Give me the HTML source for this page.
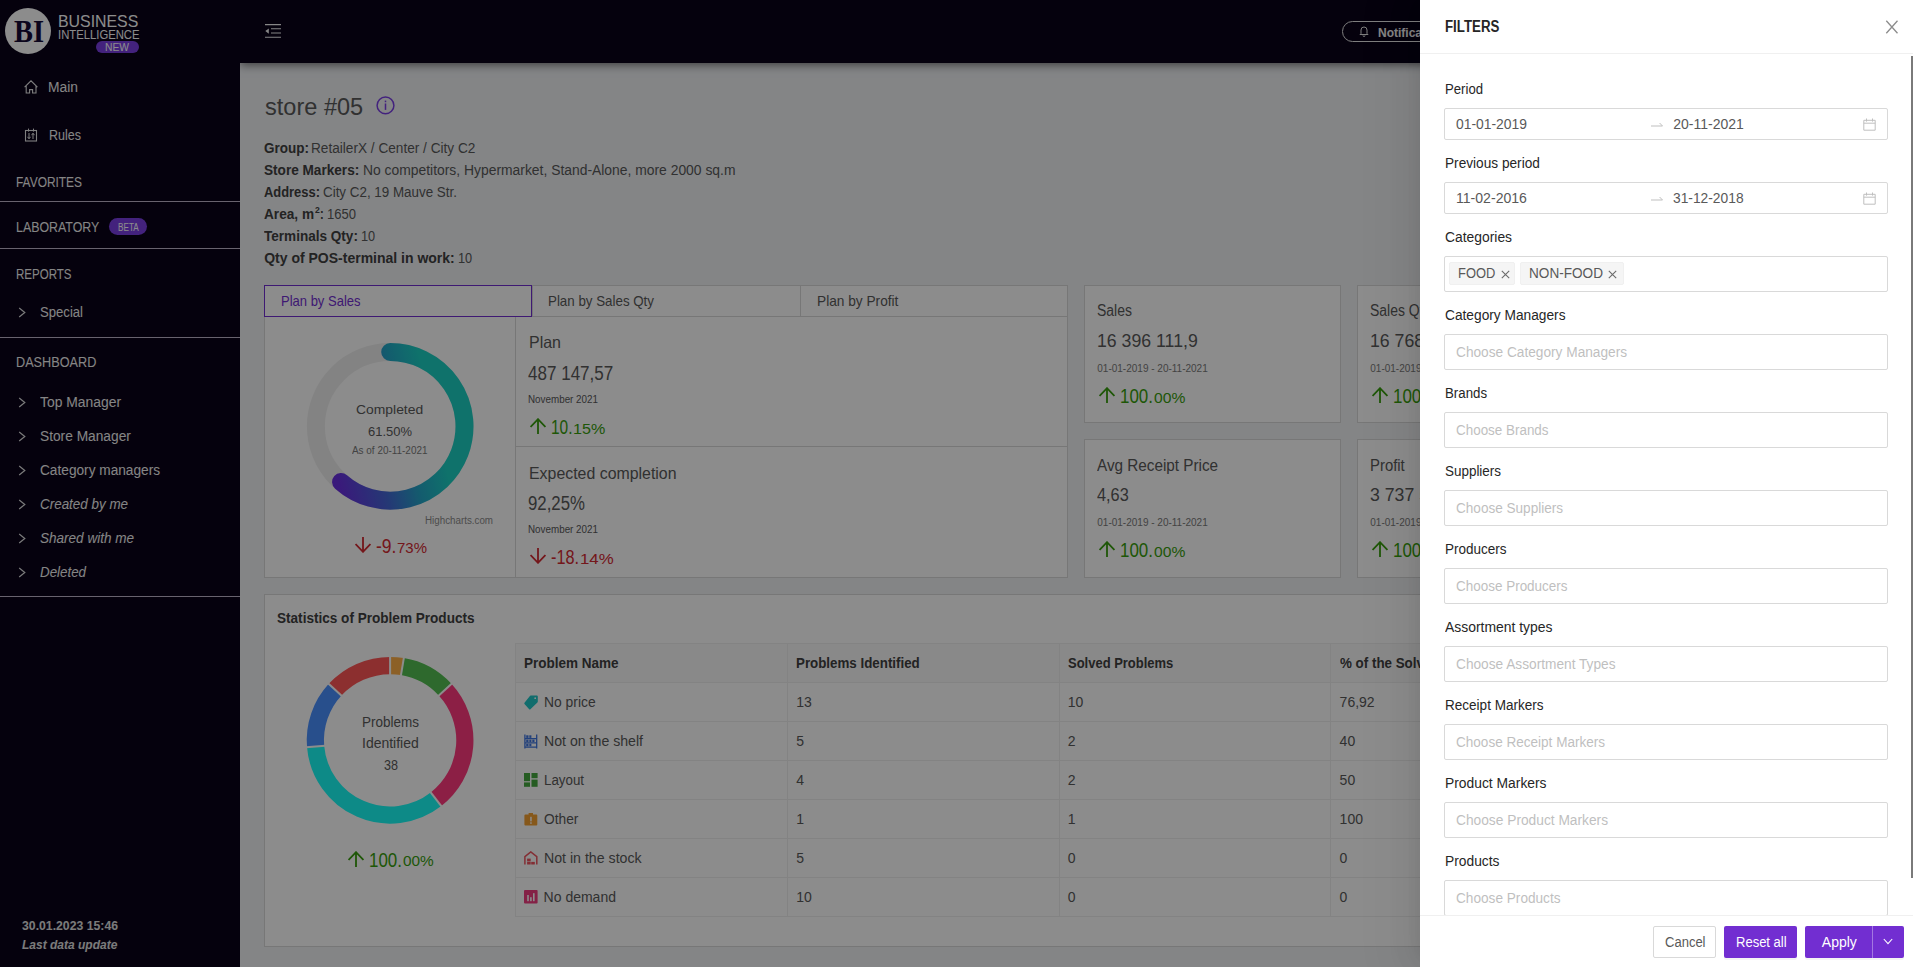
<!DOCTYPE html>
<html><head><meta charset="utf-8">
<style>
*{box-sizing:border-box;margin:0;padding:0}
html,body{width:1913px;height:967px;overflow:hidden;background:#f0f2f5;font-family:"Liberation Sans",sans-serif;font-size:14px;color:#595959;position:relative}
.a{position:absolute}
.t{position:absolute;white-space:nowrap;transform-origin:0 50%}
sup{font-size:9px}
</style></head><body>
<div class="a" style="left:240px;top:0px;width:1673px;height:63px;background:#0a0319;box-shadow:0 2px 9px rgba(0,0,0,0.55)"></div>
<div class="a" style="left:0px;top:0px;width:240px;height:967px;background:#0a0319"></div>
<div class="a" style="left:5px;top:8px;width:46px;height:46px;border-radius:50%;background:#fff"></div>
<div class="t" style="left:13.80px;top:14.60px;font-size:32px;line-height:32px;color:#150a35;font-weight:700;transform:scaleX(0.8875);font-family:'Liberation Serif',serif;">BI</div>
<div class="t" style="left:57.50px;top:13.05px;font-size:17px;line-height:17px;color:#fff;transform:scaleX(0.9337);">BUSINESS</div>
<div class="t" style="left:57.50px;top:28.25px;font-size:13px;line-height:13px;color:#fff;transform:scaleX(0.8677);">INTELLIGENCE</div>
<div class="a" style="left:95.5px;top:41px;width:43.5px;height:12px;border-radius:6px;background:#7b3fe4"></div>
<div class="t" style="left:105.20px;top:41.85px;font-size:11px;line-height:11px;color:#fff;transform:scaleX(0.9354);">NEW</div>
<svg class="a" style="left:24px;top:80px" width="15" height="14" viewBox="0 0 15 14"><path d="M0.6 7.2 L7 0.8 L13.4 7.2 M2.2 5.8 V13 H5.6 V9.6 H8.6 V13 H12 V5.8" fill="none" stroke="#e8e8e8" stroke-width="1.1"/></svg>
<div class="t" style="left:48.30px;top:80.40px;font-size:14px;line-height:14px;color:#f2f2f2;transform:scaleX(0.9892);">Main</div>
<svg class="a" style="left:24px;top:127px" width="14" height="15" viewBox="0 0 14 15"><rect x="1.5" y="3.5" width="11" height="10.5" fill="none" stroke="#e8e8e8" stroke-width="1.1"/><path d="M4.5 1.6 V4.6 M9.5 1.6 V4.6 M5 6 V11.5 M3.5 9.8 L5 11.8 L6.5 9.8 M9 12 V6.5 M7.5 8.2 L9 6.2 L10.5 8.2" fill="none" stroke="#e8e8e8" stroke-width="1"/></svg>
<div class="t" style="left:49.00px;top:128.40px;font-size:14px;line-height:14px;color:#f2f2f2;transform:scaleX(0.8943);">Rules</div>
<div class="t" style="left:16.40px;top:174.98px;font-size:14.5px;line-height:14.5px;color:#f2f2f2;transform:scaleX(0.8218);">FAVORITES</div>
<div class="a" style="left:0px;top:201px;width:240px;height:1px;background:#bdb4c8"></div>
<div class="t" style="left:16.40px;top:220.08px;font-size:14.5px;line-height:14.5px;color:#f2f2f2;transform:scaleX(0.8544);">LABORATORY</div>
<div class="a" style="left:109.2px;top:218.2px;width:37.6px;height:16.9px;border-radius:8.5px;background:#7b3fe4"></div>
<div class="t" style="left:117.65px;top:222.50px;font-size:10px;line-height:10px;color:#fff;transform:scaleX(0.8153);">BETA</div>
<div class="a" style="left:0px;top:248px;width:240px;height:1px;background:#bdb4c8"></div>
<div class="t" style="left:16.40px;top:266.68px;font-size:14.5px;line-height:14.5px;color:#f2f2f2;transform:scaleX(0.7948);">REPORTS</div>
<svg class="a" style="left:18px;top:307.0px" width="9" height="11" viewBox="0 0 9 11"><path d="M1.2 1 L6.8 5.5 L1.2 10" fill="none" stroke="#e0e0e0" stroke-width="1.2"/></svg>
<div class="t" style="left:40.30px;top:305.10px;font-size:14px;line-height:14px;color:#f2f2f2;transform:scaleX(0.9367);">Special</div>
<div class="a" style="left:0px;top:337px;width:240px;height:1px;background:#bdb4c8"></div>
<div class="t" style="left:16.40px;top:355.38px;font-size:14.5px;line-height:14.5px;color:#f2f2f2;transform:scaleX(0.8743);">DASHBOARD</div>
<svg class="a" style="left:18px;top:396.5px" width="9" height="11" viewBox="0 0 9 11"><path d="M1.2 1 L6.8 5.5 L1.2 10" fill="none" stroke="#e0e0e0" stroke-width="1.2"/></svg>
<div class="t" style="left:40.30px;top:394.70px;font-size:14px;line-height:14px;color:#f2f2f2;transform:scaleX(0.9918);">Top Manager</div>
<svg class="a" style="left:18px;top:430.5px" width="9" height="11" viewBox="0 0 9 11"><path d="M1.2 1 L6.8 5.5 L1.2 10" fill="none" stroke="#e0e0e0" stroke-width="1.2"/></svg>
<div class="t" style="left:40.30px;top:428.70px;font-size:14px;line-height:14px;color:#f2f2f2;transform:scaleX(0.9810);">Store Manager</div>
<svg class="a" style="left:18px;top:464.5px" width="9" height="11" viewBox="0 0 9 11"><path d="M1.2 1 L6.8 5.5 L1.2 10" fill="none" stroke="#e0e0e0" stroke-width="1.2"/></svg>
<div class="t" style="left:40.30px;top:462.70px;font-size:14px;line-height:14px;color:#f2f2f2;transform:scaleX(0.9765);">Category managers</div>
<svg class="a" style="left:18px;top:498.5px" width="9" height="11" viewBox="0 0 9 11"><path d="M1.2 1 L6.8 5.5 L1.2 10" fill="none" stroke="#e0e0e0" stroke-width="1.2"/></svg>
<div class="t" style="left:40.30px;top:496.70px;font-size:14px;line-height:14px;color:#f2f2f2;font-style:italic;transform:scaleX(0.9588);">Created by me</div>
<svg class="a" style="left:18px;top:532.5px" width="9" height="11" viewBox="0 0 9 11"><path d="M1.2 1 L6.8 5.5 L1.2 10" fill="none" stroke="#e0e0e0" stroke-width="1.2"/></svg>
<div class="t" style="left:40.30px;top:530.70px;font-size:14px;line-height:14px;color:#f2f2f2;font-style:italic;transform:scaleX(0.9667);">Shared with me</div>
<svg class="a" style="left:18px;top:566.5px" width="9" height="11" viewBox="0 0 9 11"><path d="M1.2 1 L6.8 5.5 L1.2 10" fill="none" stroke="#e0e0e0" stroke-width="1.2"/></svg>
<div class="t" style="left:40.30px;top:564.70px;font-size:14px;line-height:14px;color:#f2f2f2;font-style:italic;transform:scaleX(0.9537);">Deleted</div>
<div class="a" style="left:0px;top:596px;width:240px;height:1px;background:#bdb4c8"></div>
<div class="t" style="left:22.00px;top:920.30px;font-size:12px;line-height:12px;color:#e0e0e0;font-weight:700;transform:scaleX(1.0208);">30.01.2023 15:46</div>
<div class="t" style="left:22.00px;top:939.30px;font-size:12px;line-height:12px;color:#e0e0e0;font-weight:700;font-style:italic;">Last data update</div>
<svg class="a" style="left:265px;top:24px" width="16" height="14" viewBox="0 0 16 14"><path d="M0 0.6 H16 M6 4.8 H16 M6 9 H16 M0 13.2 H16" stroke="#f4f4f4" stroke-width="1.1"/><path d="M3.8 4.4 L0.3 7.1 L3.8 9.8 Z" fill="#f4f4f4"/></svg>
<div class="a" style="left:1342.4px;top:21.1px;width:120px;height:20.8px;border:1px solid #e6e6e6;border-radius:10.4px"></div>
<svg class="a" style="left:1359px;top:25px" width="10" height="12" viewBox="0 0 10 12"><path d="M2 8.5 V5 A3 3 0 0 1 8 5 V8.5 L9 9.5 H1 Z M4 10.5 A1 1 0 0 0 6 10.5" fill="none" stroke="#e8e8e8" stroke-width="1"/></svg>
<div class="t" style="left:1378.00px;top:26.70px;font-size:12px;line-height:12px;color:#f0f0f0;font-weight:700;">Notifications</div>
<div class="t" style="left:264.90px;top:94.64px;font-size:24.3px;line-height:24.3px;color:#595959;transform:scaleX(0.9691);">store #05</div>
<svg class="a" style="left:375px;top:95px" width="21" height="21" viewBox="0 0 21 21"><circle cx="10.5" cy="10.4" r="8.4" fill="none" stroke="#7b3fe4" stroke-width="1.5"/><rect x="9.75" y="8.5" width="1.5" height="6.4" fill="#7b3fe4"/><rect x="9.75" y="5.6" width="1.5" height="1.6" fill="#7b3fe4"/></svg>
<div class="t" style="left:264.20px;top:141.40px;font-size:14px;line-height:14px;color:#404040;font-weight:700;transform:scaleX(0.9627);">Group:</div>
<div class="t" style="left:311.40px;top:141.40px;font-size:14px;line-height:14px;color:#595959;transform:scaleX(0.9734);">RetailerX / Center / City C2</div>
<div class="t" style="left:264.20px;top:163.40px;font-size:14px;line-height:14px;color:#404040;font-weight:700;transform:scaleX(0.9713);">Store Markers:</div>
<div class="t" style="left:362.50px;top:163.40px;font-size:14px;line-height:14px;color:#595959;transform:scaleX(0.9910);">No competitors, Hypermarket, Stand-Alone, more 2000 sq.m</div>
<div class="t" style="left:264.20px;top:185.40px;font-size:14px;line-height:14px;color:#404040;font-weight:700;transform:scaleX(0.9216);">Address:</div>
<div class="t" style="left:322.80px;top:185.40px;font-size:14px;line-height:14px;color:#595959;transform:scaleX(0.9562);">City C2, 19 Mauve Str.</div>
<div class="t" style="left:264.20px;top:207.40px;font-size:14px;line-height:14px;color:#404040;font-weight:700;transform:scaleX(0.9735);">Area, m</div>
<div class="t" style="left:315.20px;top:206.15px;font-size:9px;line-height:9px;color:#404040;font-weight:700;transform:scaleX(0.9600);">2</div>
<div class="t" style="left:320.20px;top:207.40px;font-size:14px;line-height:14px;color:#404040;font-weight:700;transform:scaleX(0.7946);">:</div>
<div class="t" style="left:327.30px;top:207.40px;font-size:14px;line-height:14px;color:#595959;transform:scaleX(0.9317);">1650</div>
<div class="t" style="left:264.20px;top:229.40px;font-size:14px;line-height:14px;color:#404040;font-weight:700;transform:scaleX(0.9684);">Terminals Qty:</div>
<div class="t" style="left:361.10px;top:229.40px;font-size:14px;line-height:14px;color:#595959;transform:scaleX(0.9124);">10</div>
<div class="t" style="left:264.20px;top:251.40px;font-size:14px;line-height:14px;color:#404040;font-weight:700;">Qty of POS-terminal in work:</div>
<div class="t" style="left:457.70px;top:251.40px;font-size:14px;line-height:14px;color:#595959;transform:scaleX(0.9124);">10</div>
<div class="a" style="left:264px;top:285px;width:804px;height:293px;background:#fff;border:1px solid #d9d9d9"></div>
<div class="a" style="left:531.8px;top:285px;width:1px;height:32px;background:#d9d9d9"></div>
<div class="a" style="left:799.9px;top:285px;width:1px;height:32px;background:#d9d9d9"></div>
<div class="a" style="left:264px;top:316px;width:804px;height:1px;background:#d9d9d9"></div>
<div class="a" style="left:264px;top:285px;width:268px;height:32px;border:1px solid #722ed1"></div>
<div class="a" style="left:515px;top:317px;width:1px;height:261px;background:#d9d9d9"></div>
<div class="a" style="left:515px;top:446px;width:552px;height:1px;background:#d9d9d9"></div>
<div class="t" style="left:280.50px;top:293.57px;font-size:14.5px;line-height:14.5px;color:#722ed1;transform:scaleX(0.8967);">Plan by Sales</div>
<div class="t" style="left:548.20px;top:293.57px;font-size:14.5px;line-height:14.5px;color:#595959;transform:scaleX(0.9197);">Plan by Sales Qty</div>
<div class="t" style="left:816.50px;top:293.57px;font-size:14.5px;line-height:14.5px;color:#595959;transform:scaleX(0.9439);">Plan by Profit</div>
<div class="t" style="left:528.50px;top:333.98px;font-size:16.5px;line-height:16.5px;color:#595959;transform:scaleX(0.9692);">Plan</div>
<div class="t" style="left:528.30px;top:362.70px;font-size:20px;line-height:20px;color:#595959;transform:scaleX(0.8519);">487 147,57</div>
<div class="t" style="left:528.30px;top:394.60px;font-size:10px;line-height:10px;color:#595959;transform:scaleX(0.9838);">November 2021</div>
<svg class="a" style="left:529.9px;top:417.9px" width="16" height="16" viewBox="0 0 16 16"><path d="M8 16 V1.6 M0.6 9 L8 1.2 L15.4 9" fill="none" stroke="#389e0d" stroke-width="1.8"/></svg>
<div class="t" style="left:551.00px;top:416.90px;font-size:20px;line-height:20px;color:#389e0d;transform:scaleX(0.7730);">10.</div>
<div class="t" style="left:573.00px;top:420.72px;font-size:15.5px;line-height:15.5px;color:#389e0d;transform:scaleX(1.0377);">15%</div>
<div class="t" style="left:528.50px;top:464.78px;font-size:16.5px;line-height:16.5px;color:#595959;transform:scaleX(0.9633);">Expected completion</div>
<div class="t" style="left:528.30px;top:492.70px;font-size:20px;line-height:20px;color:#595959;transform:scaleX(0.8402);">92,25%</div>
<div class="t" style="left:528.30px;top:524.60px;font-size:10px;line-height:10px;color:#595959;transform:scaleX(0.9838);">November 2021</div>
<svg class="a" style="left:529.9px;top:547.9px" width="16" height="16" viewBox="0 0 16 16"><path d="M8 0 V14.4 M0.6 7 L8 14.8 L15.4 7" fill="none" stroke="#d42a32" stroke-width="1.8"/></svg>
<div class="t" style="left:551.00px;top:546.90px;font-size:20px;line-height:20px;color:#d42a32;transform:scaleX(0.8123);">-18.</div>
<div class="t" style="left:579.50px;top:550.73px;font-size:15.5px;line-height:15.5px;color:#d42a32;transform:scaleX(1.0860);">14%</div>
<svg class="a" style="left:0;top:0" width="1913" height="967" viewBox="0 0 1913 967">
<defs><linearGradient id="g1" gradientUnits="userSpaceOnUse" x1="473" y1="420" x2="307" y2="460">
<stop offset="0" stop-color="#1ccfc4"/><stop offset="0.22" stop-color="#1ccfc4"/><stop offset="0.4" stop-color="#24a8c8"/><stop offset="0.6" stop-color="#4466d6"/><stop offset="0.85" stop-color="#6a30e0"/><stop offset="1" stop-color="#6f2ee3"/></linearGradient></defs>
<circle cx="390.2" cy="426.3" r="74.3" fill="none" stroke="#efefef" stroke-width="18"/>
<path d="M390.2 352.0 A74.3 74.3 0 1 1 341.06 482.03" fill="none" stroke="url(#g1)" stroke-width="18" stroke-linecap="round"/>
</svg>
<div class="t" style="left:356.20px;top:403.32px;font-size:13.5px;line-height:13.5px;color:#595959;transform:scaleX(1.0287);">Completed</div>
<div class="t" style="left:368.20px;top:425.02px;font-size:13.5px;line-height:13.5px;color:#595959;transform:scaleX(0.9604);">61.50%</div>
<div class="t" style="left:352.05px;top:445.18px;font-size:10.5px;line-height:10.5px;color:#7a7a7a;transform:scaleX(0.9458);">As of 20-11-2021</div>
<div class="t" style="left:424.90px;top:515.90px;font-size:10px;line-height:10px;color:#8c8c8c;transform:scaleX(0.9789);">Highcharts.com</div>
<svg class="a" style="left:354.9px;top:537px" width="16" height="16" viewBox="0 0 16 16"><path d="M8 0 V14.4 M0.6 7 L8 14.8 L15.4 7" fill="none" stroke="#d42a32" stroke-width="1.8"/></svg>
<div class="t" style="left:376.10px;top:536.00px;font-size:20px;line-height:20px;color:#d42a32;transform:scaleX(0.8739);">-9.</div>
<div class="t" style="left:397.00px;top:539.83px;font-size:15.5px;line-height:15.5px;color:#d42a32;transform:scaleX(0.9668);">73%</div>
<div class="a" style="left:1084px;top:285px;width:257px;height:138px;background:#fff;border:1px solid #d9d9d9"></div>
<div class="t" style="left:1097.30px;top:303.40px;font-size:16px;line-height:16px;color:#595959;transform:scaleX(0.8740);">Sales</div>
<div class="t" style="left:1097.30px;top:332.27px;font-size:18.5px;line-height:18.5px;color:#595959;transform:scaleX(0.9572);">16 396 111,9</div>
<div class="t" style="left:1097.30px;top:363.70px;font-size:10px;line-height:10px;color:#7a7a7a;">01-01-2019 - 20-11-2021</div>
<svg class="a" style="left:1098.6px;top:387px" width="16" height="16" viewBox="0 0 16 16"><path d="M8 16 V1.6 M0.6 9 L8 1.2 L15.4 9" fill="none" stroke="#389e0d" stroke-width="1.8"/></svg>
<div class="t" style="left:1120.00px;top:386.00px;font-size:20px;line-height:20px;color:#389e0d;transform:scaleX(0.8475);">100.</div>
<div class="t" style="left:1153.50px;top:389.82px;font-size:15.5px;line-height:15.5px;color:#389e0d;transform:scaleX(1.0087);">00%</div>
<div class="a" style="left:1357px;top:285px;width:257px;height:138px;background:#fff;border:1px solid #d9d9d9"></div>
<div class="t" style="left:1370.30px;top:303.40px;font-size:16px;line-height:16px;color:#595959;transform:scaleX(0.8740);">Sales Qty</div>
<div class="t" style="left:1370.30px;top:332.27px;font-size:18.5px;line-height:18.5px;color:#595959;transform:scaleX(0.9572);">16 768 558</div>
<div class="t" style="left:1370.30px;top:363.70px;font-size:10px;line-height:10px;color:#7a7a7a;">01-01-2019 - 20-11-2021</div>
<svg class="a" style="left:1371.6px;top:387px" width="16" height="16" viewBox="0 0 16 16"><path d="M8 16 V1.6 M0.6 9 L8 1.2 L15.4 9" fill="none" stroke="#389e0d" stroke-width="1.8"/></svg>
<div class="t" style="left:1393.00px;top:386.00px;font-size:20px;line-height:20px;color:#389e0d;transform:scaleX(0.8475);">100.</div>
<div class="t" style="left:1426.50px;top:389.82px;font-size:15.5px;line-height:15.5px;color:#389e0d;transform:scaleX(1.0087);">00%</div>
<div class="a" style="left:1084px;top:439px;width:257px;height:139px;background:#fff;border:1px solid #d9d9d9"></div>
<div class="t" style="left:1097.30px;top:457.50px;font-size:16px;line-height:16px;color:#595959;transform:scaleX(0.9546);">Avg Receipt Price</div>
<div class="t" style="left:1097.30px;top:486.38px;font-size:18.5px;line-height:18.5px;color:#595959;transform:scaleX(0.8809);">4,63</div>
<div class="t" style="left:1097.30px;top:517.80px;font-size:10px;line-height:10px;color:#7a7a7a;">01-01-2019 - 20-11-2021</div>
<svg class="a" style="left:1098.6px;top:541.1px" width="16" height="16" viewBox="0 0 16 16"><path d="M8 16 V1.6 M0.6 9 L8 1.2 L15.4 9" fill="none" stroke="#389e0d" stroke-width="1.8"/></svg>
<div class="t" style="left:1120.00px;top:540.10px;font-size:20px;line-height:20px;color:#389e0d;transform:scaleX(0.8475);">100.</div>
<div class="t" style="left:1153.50px;top:543.93px;font-size:15.5px;line-height:15.5px;color:#389e0d;transform:scaleX(1.0087);">00%</div>
<div class="a" style="left:1357px;top:439px;width:257px;height:139px;background:#fff;border:1px solid #d9d9d9"></div>
<div class="t" style="left:1370.30px;top:457.50px;font-size:16px;line-height:16px;color:#595959;transform:scaleX(0.9300);">Profit</div>
<div class="t" style="left:1370.30px;top:486.38px;font-size:18.5px;line-height:18.5px;color:#595959;transform:scaleX(0.9572);">3 737 596,5</div>
<div class="t" style="left:1370.30px;top:517.80px;font-size:10px;line-height:10px;color:#7a7a7a;">01-01-2019 - 20-11-2021</div>
<svg class="a" style="left:1371.6px;top:541.1px" width="16" height="16" viewBox="0 0 16 16"><path d="M8 16 V1.6 M0.6 9 L8 1.2 L15.4 9" fill="none" stroke="#389e0d" stroke-width="1.8"/></svg>
<div class="t" style="left:1393.00px;top:540.10px;font-size:20px;line-height:20px;color:#389e0d;transform:scaleX(0.8475);">100.</div>
<div class="t" style="left:1426.50px;top:543.93px;font-size:15.5px;line-height:15.5px;color:#389e0d;transform:scaleX(1.0087);">00%</div>
<div class="a" style="left:264px;top:594px;width:1300px;height:353px;background:#fff;border:1px solid #d9d9d9"></div>
<div class="t" style="left:277.20px;top:610.60px;font-size:14px;line-height:14px;color:#404040;font-weight:700;transform:scaleX(0.9693);">Statistics of Problem Products</div>
<svg class="a" style="left:0;top:0" width="1913" height="967" viewBox="0 0 1913 967"><path d="M390.10 665.55 A74.75 74.75 0 0 1 402.40 666.57" fill="none" stroke="#ffb048" stroke-width="17.2"/><path d="M402.40 666.57 A74.75 74.75 0 0 1 445.10 689.67" fill="none" stroke="#54c052" stroke-width="17.2"/><path d="M445.10 689.67 A74.75 74.75 0 0 1 436.01 799.29" fill="none" stroke="#ff3a7e" stroke-width="17.2"/><path d="M436.01 799.29 A74.75 74.75 0 0 1 315.61 746.47" fill="none" stroke="#18fcf6" stroke-width="17.2"/><path d="M315.61 746.47 A74.75 74.75 0 0 1 335.10 689.67" fill="none" stroke="#4a90ff" stroke-width="17.2"/><path d="M335.10 689.67 A74.75 74.75 0 0 1 390.10 665.55" fill="none" stroke="#ff5656" stroke-width="17.2"/><line x1="390.10" y1="675.15" x2="390.10" y2="655.95" stroke="#fff" stroke-width="2"/><line x1="400.82" y1="676.04" x2="403.98" y2="657.10" stroke="#fff" stroke-width="2"/><line x1="438.03" y1="696.18" x2="452.16" y2="683.17" stroke="#fff" stroke-width="2"/><line x1="430.12" y1="791.71" x2="441.91" y2="806.86" stroke="#fff" stroke-width="2"/><line x1="325.17" y1="745.68" x2="306.04" y2="747.27" stroke="#fff" stroke-width="2"/><line x1="342.17" y1="696.18" x2="328.04" y2="683.17" stroke="#fff" stroke-width="2"/></svg>
<div class="t" style="left:362.00px;top:713.55px;font-size:15px;line-height:15px;color:#595959;transform:scaleX(0.8996);">Problems</div>
<div class="t" style="left:362.15px;top:735.25px;font-size:15px;line-height:15px;color:#595959;transform:scaleX(0.9312);">Identified</div>
<div class="t" style="left:384.10px;top:757.15px;font-size:15px;line-height:15px;color:#595959;transform:scaleX(0.8390);">38</div>
<svg class="a" style="left:348.4px;top:850.6px" width="16" height="16" viewBox="0 0 16 16"><path d="M8 16 V1.6 M0.6 9 L8 1.2 L15.4 9" fill="none" stroke="#389e0d" stroke-width="1.8"/></svg>
<div class="t" style="left:369.40px;top:849.60px;font-size:20px;line-height:20px;color:#389e0d;transform:scaleX(0.8475);">100.</div>
<div class="t" style="left:402.90px;top:853.43px;font-size:15.5px;line-height:15.5px;color:#389e0d;transform:scaleX(0.9925);">00%</div>
<div class="a" style="left:515px;top:643px;width:1000px;height:39px;background:#fafafa"></div>
<div class="a" style="left:515px;top:643px;width:1000px;height:1px;background:#efefef"></div>
<div class="a" style="left:515px;top:682px;width:1000px;height:1px;background:#efefef"></div>
<div class="a" style="left:515px;top:721px;width:1000px;height:1px;background:#efefef"></div>
<div class="a" style="left:515px;top:760px;width:1000px;height:1px;background:#efefef"></div>
<div class="a" style="left:515px;top:799px;width:1000px;height:1px;background:#efefef"></div>
<div class="a" style="left:515px;top:838px;width:1000px;height:1px;background:#efefef"></div>
<div class="a" style="left:515px;top:877px;width:1000px;height:1px;background:#efefef"></div>
<div class="a" style="left:515px;top:916px;width:1000px;height:1px;background:#efefef"></div>
<div class="a" style="left:515px;top:643px;width:1px;height:274px;background:#efefef"></div>
<div class="a" style="left:787px;top:643px;width:1px;height:274px;background:#efefef"></div>
<div class="a" style="left:1059px;top:643px;width:1px;height:274px;background:#efefef"></div>
<div class="a" style="left:1330px;top:643px;width:1px;height:274px;background:#efefef"></div>
<div class="t" style="left:524.40px;top:655.80px;font-size:14px;line-height:14px;color:#404040;font-weight:700;transform:scaleX(0.9650);">Problem Name</div>
<div class="t" style="left:796.30px;top:655.80px;font-size:14px;line-height:14px;color:#404040;font-weight:700;transform:scaleX(0.9525);">Problems Identified</div>
<div class="t" style="left:1067.80px;top:655.80px;font-size:14px;line-height:14px;color:#404040;font-weight:700;transform:scaleX(0.9271);">Solved Problems</div>
<div class="t" style="left:1339.60px;top:655.80px;font-size:14px;line-height:14px;color:#404040;font-weight:700;transform:scaleX(0.9550);">% of the Solved Problems</div>
<svg class="a" style="left:524px;top:694.5px" width="15" height="15" viewBox="0 0 15 15"><path d="M6.6 0.6 H12.9 Q13.8 0.6 13.8 1.6 V6.6 Q13.8 7.1 13.4 7.5 L6.4 14.3 Q5.8 14.9 5.2 14.3 L0.5 9 Q0 8.4 0.5 7.8 L5.9 1 Q6.2 0.6 6.6 0.6 Z" fill="#1fc6c6"/><circle cx="11.2" cy="3.2" r="0.9" fill="#fff"/></svg>
<div class="t" style="left:543.60px;top:695.20px;font-size:14px;line-height:14px;color:#595959;transform:scaleX(0.9902);">No price</div>
<div class="t" style="left:796.30px;top:695.20px;font-size:14px;line-height:14px;color:#595959;">13</div>
<div class="t" style="left:1067.80px;top:695.20px;font-size:14px;line-height:14px;color:#595959;">10</div>
<div class="t" style="left:1339.60px;top:695.20px;font-size:14px;line-height:14px;color:#595959;">76,92</div>
<svg class="a" style="left:524px;top:733.6px" width="15" height="15" viewBox="0 0 15 15"><path d="M0.9 0.4 V14.4 M12.7 0.4 V14.4 M0.9 4.7 H12.7 M0.9 8.9 H12.7 M0.9 13.1 H12.7" stroke="#3f76e0" stroke-width="1.3" fill="none"/><rect x="2.2" y="1.3" width="2.3" height="2.6" fill="#3f76e0"/><rect x="5.3" y="1.3" width="2.1" height="2.6" fill="#3f76e0"/><rect x="2.2" y="5.6" width="2.3" height="2.4" fill="#3f76e0"/><rect x="5.3" y="5.6" width="2.1" height="2.4" fill="#3f76e0"/><rect x="8.3" y="5.6" width="2.2" height="2.4" fill="#3f76e0"/><rect x="2.2" y="9.8" width="2.3" height="2.5" fill="#3f76e0"/><rect x="5.3" y="9.8" width="2.1" height="2.5" fill="#3f76e0"/></svg>
<div class="t" style="left:543.60px;top:734.20px;font-size:14px;line-height:14px;color:#595959;transform:scaleX(1.0099);">Not on the shelf</div>
<div class="t" style="left:796.30px;top:734.20px;font-size:14px;line-height:14px;color:#595959;">5</div>
<div class="t" style="left:1067.80px;top:734.20px;font-size:14px;line-height:14px;color:#595959;">2</div>
<div class="t" style="left:1339.60px;top:734.20px;font-size:14px;line-height:14px;color:#595959;">40</div>
<svg class="a" style="left:524px;top:773.2px" width="15" height="15" viewBox="0 0 15 15"><rect x="0" y="0" width="6" height="8.2" fill="#44a83f"/><rect x="7.5" y="0" width="6.1" height="5.2" fill="#44a83f"/><rect x="0" y="9.4" width="6" height="4.4" fill="#44a83f"/><rect x="7.5" y="6.6" width="6.1" height="7.2" fill="#44a83f"/></svg>
<div class="t" style="left:543.60px;top:773.20px;font-size:14px;line-height:14px;color:#595959;transform:scaleX(0.9520);">Layout</div>
<div class="t" style="left:796.30px;top:773.20px;font-size:14px;line-height:14px;color:#595959;">4</div>
<div class="t" style="left:1067.80px;top:773.20px;font-size:14px;line-height:14px;color:#595959;">2</div>
<div class="t" style="left:1339.60px;top:773.20px;font-size:14px;line-height:14px;color:#595959;">50</div>
<svg class="a" style="left:524px;top:812.2px" width="15" height="15" viewBox="0 0 15 15"><path d="M1.4 2.6 H4.6 V1 H9 V2.6 H12.3 Q13.3 2.6 13.3 3.6 V12.5 Q13.3 13.4 12.3 13.4 H1.4 Q0.4 13.4 0.4 12.5 V3.6 Q0.4 2.6 1.4 2.6 Z" fill="#f5a032"/><rect x="6.2" y="4.8" width="1.5" height="4.6" fill="#fff"/><rect x="6.2" y="10.3" width="1.5" height="1.5" fill="#fff"/></svg>
<div class="t" style="left:543.60px;top:812.20px;font-size:14px;line-height:14px;color:#595959;transform:scaleX(0.9829);">Other</div>
<div class="t" style="left:796.30px;top:812.20px;font-size:14px;line-height:14px;color:#595959;">1</div>
<div class="t" style="left:1067.80px;top:812.20px;font-size:14px;line-height:14px;color:#595959;">1</div>
<div class="t" style="left:1339.60px;top:812.20px;font-size:14px;line-height:14px;color:#595959;">100</div>
<svg class="a" style="left:524px;top:851.4px" width="15" height="15" viewBox="0 0 15 15"><path d="M0.9 13.4 V5.6 L6.8 0.9 L12.8 5.6 V13.4" fill="none" stroke="#ee5560" stroke-width="1.5"/><rect x="3.1" y="7.6" width="3.6" height="2.8" fill="#ee5560"/><rect x="3.1" y="10.9" width="3.6" height="2.6" fill="#ee5560"/><rect x="7.2" y="10.9" width="3.6" height="2.6" fill="#ee5560"/></svg>
<div class="t" style="left:543.60px;top:851.20px;font-size:14px;line-height:14px;color:#595959;transform:scaleX(1.0117);">Not in the stock</div>
<div class="t" style="left:796.30px;top:851.20px;font-size:14px;line-height:14px;color:#595959;">5</div>
<div class="t" style="left:1067.80px;top:851.20px;font-size:14px;line-height:14px;color:#595959;">0</div>
<div class="t" style="left:1339.60px;top:851.20px;font-size:14px;line-height:14px;color:#595959;">0</div>
<svg class="a" style="left:524px;top:890.1px" width="15" height="15" viewBox="0 0 15 15"><rect x="0" y="0" width="13.6" height="13.6" rx="1" fill="#f03d80"/><rect x="3.2" y="5" width="1.6" height="6.2" fill="#fff"/><rect x="6.1" y="7.2" width="1.6" height="4" fill="#fff"/><rect x="9" y="3.2" width="1.6" height="8" fill="#fff"/></svg>
<div class="t" style="left:543.60px;top:890.20px;font-size:14px;line-height:14px;color:#595959;">No demand</div>
<div class="t" style="left:796.30px;top:890.20px;font-size:14px;line-height:14px;color:#595959;">10</div>
<div class="t" style="left:1067.80px;top:890.20px;font-size:14px;line-height:14px;color:#595959;">0</div>
<div class="t" style="left:1339.60px;top:890.20px;font-size:14px;line-height:14px;color:#595959;">0</div>
<div class="a" style="left:0px;top:0px;width:1913px;height:967px;background:rgba(0,0,0,0.45)"></div>
<div class="a" style="left:1420px;top:0px;width:493px;height:967px;background:#fff;box-shadow:-6px 0 16px -8px rgba(0,0,0,.08),-9px 0 28px 0 rgba(0,0,0,.05),-12px 0 48px 16px rgba(0,0,0,.03)"></div>
<div class="t" style="left:1444.60px;top:18.60px;font-size:16px;line-height:16px;color:#262626;font-weight:700;transform:scaleX(0.8303);">FILTERS</div>
<svg class="a" style="left:1885px;top:20px" width="14" height="14" viewBox="0 0 14 14"><path d="M1.3 0.8 L12.5 13.2 M12.5 0.8 L1.3 13.2" stroke="#8c8c8c" stroke-width="1.3"/></svg>
<div class="a" style="left:1420px;top:53px;width:493px;height:1px;background:#f0f0f0"></div>
<div class="t" style="left:1444.70px;top:82.10px;font-size:14px;line-height:14px;color:#262626;transform:scaleX(0.9394);">Period</div>
<div class="a" style="left:1444.4px;top:108.3px;width:443.6px;height:31.5px;border:1px solid #d9d9d9;border-radius:2px"></div>
<div class="t" style="left:1456.40px;top:117.20px;font-size:14px;line-height:14px;color:#595959;transform:scaleX(0.9907);">01-01-2019</div>
<div class="t" style="left:1673.30px;top:117.20px;font-size:14px;line-height:14px;color:#595959;">20-11-2021</div>
<svg class="a" style="left:1651px;top:121.8px" width="12" height="5" viewBox="0 0 12 5"><path d="M0 4 H11.5 L8.6 1" fill="none" stroke="#bfbfbf" stroke-width="1"/></svg>
<svg class="a" style="left:1862.5px;top:117.8px" width="13" height="13" viewBox="0 0 13 13"><path d="M0.8 2.3 H12.2 V12.2 H0.8 Z M0.8 5.2 H12.2 M3.5 0.5 V3.6 M9.5 0.5 V3.6" fill="none" stroke="#bfbfbf" stroke-width="1"/></svg>
<div class="t" style="left:1444.70px;top:155.80px;font-size:14px;line-height:14px;color:#262626;transform:scaleX(0.9750);">Previous period</div>
<div class="a" style="left:1444.4px;top:182.3px;width:443.6px;height:31.5px;border:1px solid #d9d9d9;border-radius:2px"></div>
<div class="t" style="left:1456.40px;top:191.20px;font-size:14px;line-height:14px;color:#595959;transform:scaleX(1.0052);">11-02-2016</div>
<div class="t" style="left:1673.30px;top:191.20px;font-size:14px;line-height:14px;color:#595959;transform:scaleX(0.9852);">31-12-2018</div>
<svg class="a" style="left:1651px;top:195.8px" width="12" height="5" viewBox="0 0 12 5"><path d="M0 4 H11.5 L8.6 1" fill="none" stroke="#bfbfbf" stroke-width="1"/></svg>
<svg class="a" style="left:1862.5px;top:191.8px" width="13" height="13" viewBox="0 0 13 13"><path d="M0.8 2.3 H12.2 V12.2 H0.8 Z M0.8 5.2 H12.2 M3.5 0.5 V3.6 M9.5 0.5 V3.6" fill="none" stroke="#bfbfbf" stroke-width="1"/></svg>
<div class="t" style="left:1444.70px;top:229.70px;font-size:14px;line-height:14px;color:#262626;transform:scaleX(0.9901);">Categories</div>
<div class="a" style="left:1444.4px;top:256.2px;width:443.6px;height:35.6px;border:1px solid #d9d9d9;border-radius:2px"></div>
<div class="a" style="left:1449.1px;top:262.2px;width:66.40000000000009px;height:23.2px;background:#f5f5f5;border:1px solid #f0f0f0;border-radius:2px"></div>
<div class="t" style="left:1458.10px;top:265.90px;font-size:14px;line-height:14px;color:#595959;transform:scaleX(0.9224);">FOOD</div>
<svg class="a" style="left:1500.6px;top:269.5px" width="9" height="9" viewBox="0 0 9 9"><path d="M0.8 0.8 L8.2 8.2 M8.2 0.8 L0.8 8.2" stroke="#6b6b6b" stroke-width="1.1"/></svg>
<div class="a" style="left:1519.9px;top:262.2px;width:103.89999999999986px;height:23.2px;background:#f5f5f5;border:1px solid #f0f0f0;border-radius:2px"></div>
<div class="t" style="left:1528.90px;top:265.90px;font-size:14px;line-height:14px;color:#595959;transform:scaleX(0.9711);">NON-FOOD</div>
<svg class="a" style="left:1608.3px;top:269.5px" width="9" height="9" viewBox="0 0 9 9"><path d="M0.8 0.8 L8.2 8.2 M8.2 0.8 L0.8 8.2" stroke="#6b6b6b" stroke-width="1.1"/></svg>
<div class="t" style="left:1444.70px;top:307.80px;font-size:14px;line-height:14px;color:#262626;transform:scaleX(0.9805);">Category Managers</div>
<div class="a" style="left:1444.4px;top:334px;width:443.6px;height:35.6px;border:1px solid #d9d9d9;border-radius:2px"></div>
<div class="t" style="left:1456.30px;top:345.10px;font-size:14px;line-height:14px;color:#bfbfbf;transform:scaleX(0.9771);">Choose Category Managers</div>
<div class="t" style="left:1444.70px;top:385.80px;font-size:14px;line-height:14px;color:#262626;transform:scaleX(0.9471);">Brands</div>
<div class="a" style="left:1444.4px;top:412px;width:443.6px;height:35.6px;border:1px solid #d9d9d9;border-radius:2px"></div>
<div class="t" style="left:1456.30px;top:423.10px;font-size:14px;line-height:14px;color:#bfbfbf;transform:scaleX(0.9589);">Choose Brands</div>
<div class="t" style="left:1444.70px;top:463.80px;font-size:14px;line-height:14px;color:#262626;transform:scaleX(0.9598);">Suppliers</div>
<div class="a" style="left:1444.4px;top:490px;width:443.6px;height:35.6px;border:1px solid #d9d9d9;border-radius:2px"></div>
<div class="t" style="left:1456.30px;top:501.10px;font-size:14px;line-height:14px;color:#bfbfbf;transform:scaleX(0.9686);">Choose Suppliers</div>
<div class="t" style="left:1444.70px;top:541.80px;font-size:14px;line-height:14px;color:#262626;transform:scaleX(0.9642);">Producers</div>
<div class="a" style="left:1444.4px;top:568px;width:443.6px;height:35.6px;border:1px solid #d9d9d9;border-radius:2px"></div>
<div class="t" style="left:1456.30px;top:579.10px;font-size:14px;line-height:14px;color:#bfbfbf;transform:scaleX(0.9620);">Choose Producers</div>
<div class="t" style="left:1444.70px;top:619.80px;font-size:14px;line-height:14px;color:#262626;transform:scaleX(0.9942);">Assortment types</div>
<div class="a" style="left:1444.4px;top:646px;width:443.6px;height:35.6px;border:1px solid #d9d9d9;border-radius:2px"></div>
<div class="t" style="left:1456.30px;top:657.10px;font-size:14px;line-height:14px;color:#bfbfbf;transform:scaleX(0.9778);">Choose Assortment Types</div>
<div class="t" style="left:1444.70px;top:697.80px;font-size:14px;line-height:14px;color:#262626;transform:scaleX(0.9669);">Receipt Markers</div>
<div class="a" style="left:1444.4px;top:724px;width:443.6px;height:35.6px;border:1px solid #d9d9d9;border-radius:2px"></div>
<div class="t" style="left:1456.30px;top:735.10px;font-size:14px;line-height:14px;color:#bfbfbf;transform:scaleX(0.9675);">Choose Receipt Markers</div>
<div class="t" style="left:1444.70px;top:775.80px;font-size:14px;line-height:14px;color:#262626;transform:scaleX(0.9887);">Product Markers</div>
<div class="a" style="left:1444.4px;top:802px;width:443.6px;height:35.6px;border:1px solid #d9d9d9;border-radius:2px"></div>
<div class="t" style="left:1456.30px;top:813.10px;font-size:14px;line-height:14px;color:#bfbfbf;transform:scaleX(0.9820);">Choose Product Markers</div>
<div class="t" style="left:1444.70px;top:853.80px;font-size:14px;line-height:14px;color:#262626;transform:scaleX(0.9867);">Products</div>
<div class="a" style="left:1444.4px;top:880px;width:443.6px;height:35.6px;border:1px solid #d9d9d9;border-radius:2px"></div>
<div class="t" style="left:1456.30px;top:891.10px;font-size:14px;line-height:14px;color:#bfbfbf;transform:scaleX(0.9734);">Choose Products</div>
<div class="a" style="left:1420px;top:915px;width:493px;height:52px;background:#fff;border-top:1px solid #f0f0f0"></div>
<div class="a" style="left:1653px;top:926px;width:63px;height:32px;border:1px solid #d9d9d9;border-radius:2px;background:#fff"></div>
<div class="t" style="left:1664.50px;top:935.00px;font-size:14px;line-height:14px;color:#595959;transform:scaleX(0.9297);">Cancel</div>
<div class="a" style="left:1724px;top:926px;width:73px;height:32px;background:#722ed1;border-radius:2px;box-shadow:0 2px 0 rgba(0,0,0,.045)"></div>
<div class="t" style="left:1735.70px;top:935.00px;font-size:14px;line-height:14px;color:#fff;transform:scaleX(0.9292);">Reset all</div>
<div class="a" style="left:1805px;top:926px;width:99px;height:32px;background:#722ed1;border-radius:2px;box-shadow:0 2px 0 rgba(0,0,0,.045)"></div>
<div class="a" style="left:1872px;top:926px;width:1px;height:32px;background:rgba(255,255,255,0.35)"></div>
<div class="t" style="left:1821.80px;top:935.00px;font-size:14px;line-height:14px;color:#fff;">Apply</div>
<svg class="a" style="left:1883px;top:938px" width="10" height="7" viewBox="0 0 10 7"><path d="M0.8 1 L5 5.6 L9.2 1" fill="none" stroke="#fff" stroke-width="1.1"/></svg>
<div class="a" style="left:1911px;top:56px;width:2px;height:822px;background:#7a7a7a"></div>
</body></html>
